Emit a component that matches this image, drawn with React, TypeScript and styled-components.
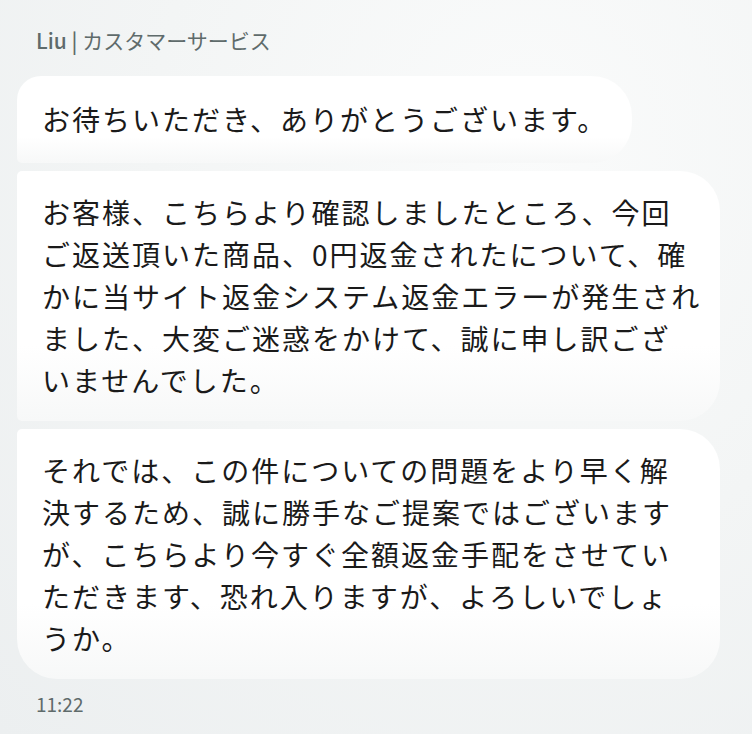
import styled, { createGlobalStyle } from "styled-components"

const GlobalStyle = createGlobalStyle`
  html, body {
    margin: 0;
    padding: 0;
  }
  body {
    font-family: "Noto Sans CJK JP", "Noto Sans", sans-serif;
    background: #f1f3f4;
  }
`

const Page = styled.div`
  width: 752px;
  height: 734px;
  box-sizing: border-box;
  padding: 24px 32px 0 17px;
  display: flex;
  flex-direction: column;
  gap: 8px;
  background: radial-gradient(ellipse at 70% 20%, #fafbfb 0%, #f3f5f5 50%, #eceff0 100%);
  overflow: hidden;
`

const Sender = styled.div`
  padding-left: 19px;
  margin-bottom: 12px;
  font-size: 21px;
  line-height: 32px;
  color: #5f6b6b;

  b {
    font-weight: 500;
  }
`

type BubbleProps = { $first?: boolean; $last?: boolean; $fit?: boolean }

const Bubble = styled.div<BubbleProps>`
  box-sizing: border-box;
  width: ${(p) => (p.$fit ? "fit-content" : "100%")};
  padding: ${(p) => (p.$fit ? "22px 25px 23px 25px" : "20px 25px")};
  background: linear-gradient(180deg, #ffffff 0%, #ffffff 70%, #f7f8f8 100%);
  border-radius: ${(p) => (p.$first ? "24px" : "5px")} 40px 40px
    ${(p) => (p.$last ? "40px" : "5px")};
  font-size: 28px;
  line-height: 42px;
  letter-spacing: 2px;
  color: #1a1a1a;
  white-space: nowrap;
`

const Time = styled.div`
  padding-left: 19px;
  margin-top: 3px;
  font-size: 19px;
  line-height: 28px;
  color: #5f6b6b;
`

const messages = [
  ["お待ちいただき、ありがとうございます。"],
  [
    "お客様、こちらより確認しましたところ、今回",
    "ご返送頂いた商品、0円返金されたについて、確",
    "かに当サイト返金システム返金エラーが発生され",
    "ました、大変ご迷惑をかけて、誠に申し訳ござ",
    "いませんでした。",
  ],
  [
    "それでは、この件についての問題をより早く解",
    "決するため、誠に勝手なご提案ではございます",
    "が、こちらより今すぐ全額返金手配をさせてい",
    "ただきます、恐れ入りますが、よろしいでしょ",
    "うか。",
  ],
]

export default function App() {
  return (
    <>
      <GlobalStyle />
      <Page>
        <Sender>
          <b>Liu |</b> カスタマーサービス
        </Sender>
        {messages.map((lines, i) => (
          <Bubble
            key={i}
            $first={i === 0}
            $last={i === messages.length - 1}
            $fit={lines.length === 1}
          >
            {lines.map((line, j) => (
              <div key={j}>{line}</div>
            ))}
          </Bubble>
        ))}
        <Time>11:22</Time>
      </Page>
    </>
  )
}
